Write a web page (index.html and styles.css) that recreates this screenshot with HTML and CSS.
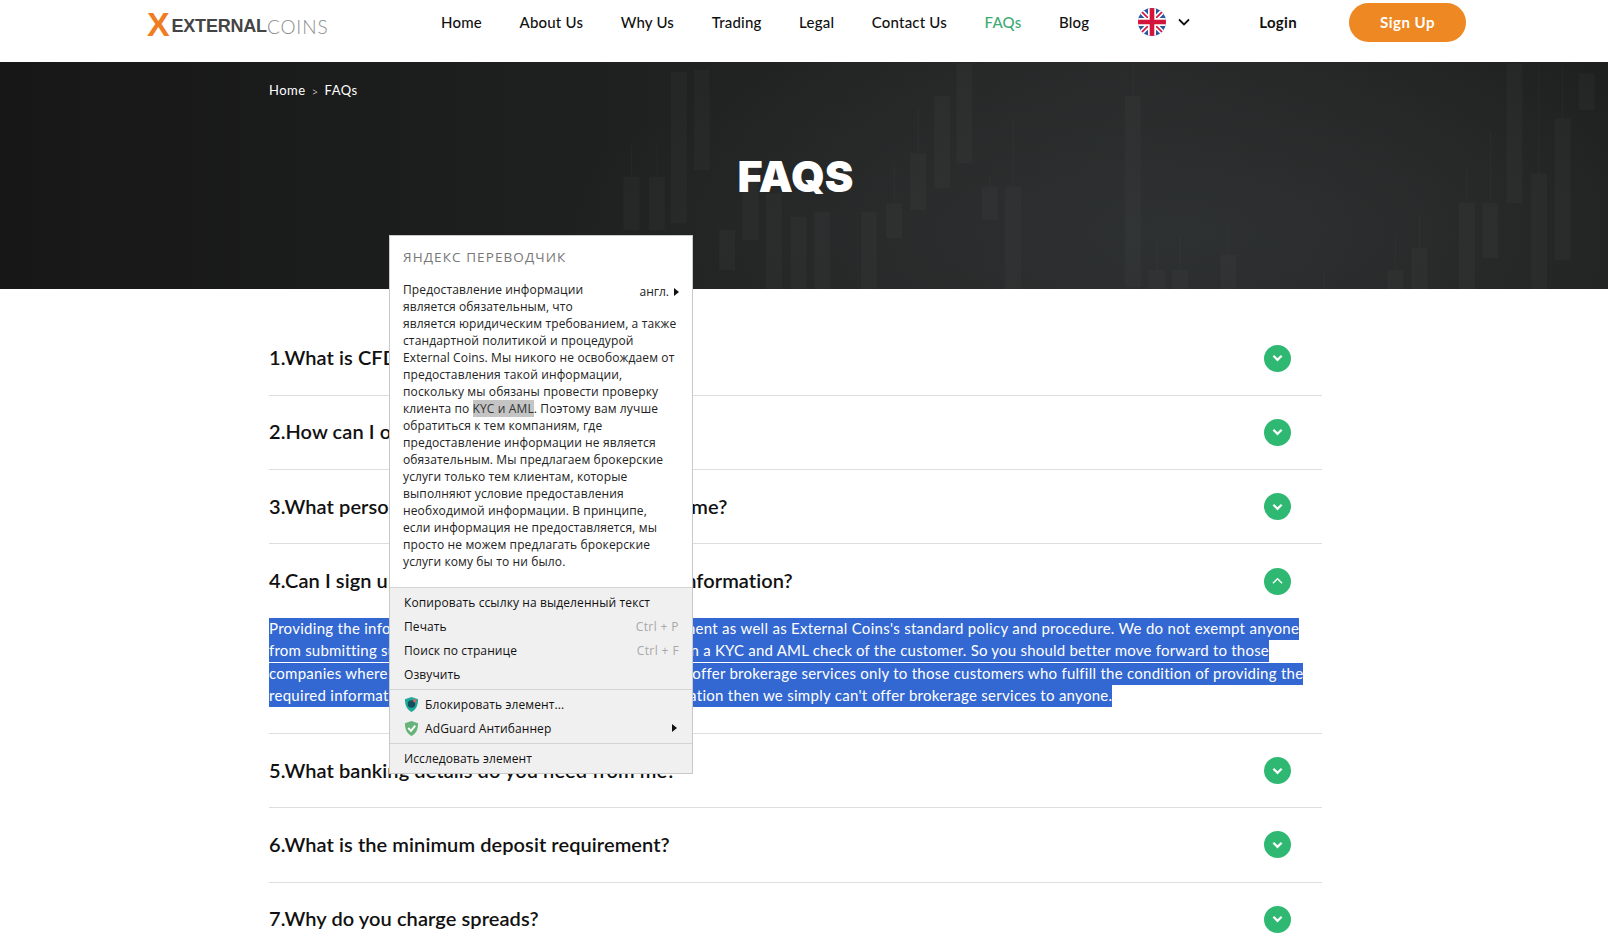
FILE: index.html
```html
<!DOCTYPE html>
<html lang="en">
<head>
  <meta charset="UTF-8" />
  <meta name="viewport" content="width=device-width, initial-scale=1.0" />
  <title>FAQs - External Coins</title>
  <link rel="stylesheet" href="styles.css">
</head>
<body>
  <header class="topbar">
    <a class="logo" href="#"><span class="logo-x">X</span><b>EXTERNAL</b><span class="logo-thin">COINS</span></a>
    <nav class="menu">
      <a href="#">Home</a>
      <a href="#">About Us</a>
      <a href="#">Why Us</a>
      <a href="#">Trading</a>
      <a href="#">Legal</a>
      <a href="#">Contact Us</a>
      <a href="#" class="active">FAQs</a>
      <a href="#">Blog</a>
    </nav>
    <div class="lang">
      <svg class="flag" viewBox="0 0 28 28" width="28" height="28">
        <defs><clipPath id="round"><circle cx="14" cy="14" r="14"/></clipPath></defs>
        <g clip-path="url(#round)">
          <rect width="28" height="28" fill="#2a57a5"/>
          <path d="M0 0L28 28M28 0L0 28" stroke="#fff" stroke-width="5"/>
          <path d="M0 0L28 28M28 0L0 28" stroke="#d3153c" stroke-width="1.6"/>
          <path d="M14 0V28M0 14H28" stroke="#fff" stroke-width="8"/>
          <path d="M14 0V28M0 14H28" stroke="#d3153c" stroke-width="4.6"/>
        </g>
      </svg>
      <svg class="caret" viewBox="0 0 12 8" width="12" height="8"><path d="M1 1.5L6 6.5L11 1.5" fill="none" stroke="#111" stroke-width="1.8"/></svg>
    </div>
    <a class="login" href="#">Login</a>
    <a class="signup" href="#">Sign Up</a>
  </header>

  <section class="hero">
    <svg class="candles" viewBox="0 6 1568 681" preserveAspectRatio="none">
      <g fill="#fff" fill-opacity="0.025">
        <rect x="95" y="350" width="24" height="160"/><rect x="133" y="350" width="24" height="160"/>
        <rect x="166" y="35" width="24" height="455"/><rect x="200" y="30" width="24" height="300"/>
        <rect x="238" y="510" width="24" height="120"/><rect x="273" y="300" width="24" height="240"/>
        <rect x="308" y="400" width="24" height="287"/><rect x="345" y="470" width="24" height="217"/>
        <rect x="380" y="455" width="24" height="232"/><rect x="450" y="455" width="24" height="232"/>
        <rect x="488" y="430" width="24" height="105"/><rect x="524" y="280" width="24" height="170"/>
        <rect x="560" y="108" width="24" height="277"/><rect x="593" y="10" width="24" height="300"/>
        <rect x="631" y="380" width="24" height="100"/><rect x="666" y="380" width="24" height="307"/>
        <rect x="845" y="108" width="24" height="572"/><rect x="881" y="630" width="24" height="57"/>
        <rect x="916" y="630" width="24" height="57"/><rect x="988" y="585" width="24" height="102"/>
        <rect x="1238" y="630" width="24" height="57"/><rect x="1274" y="565" width="24" height="122"/>
        <rect x="1345" y="428" width="24" height="259"/><rect x="1380" y="428" width="24" height="167"/>
        <rect x="1416" y="10" width="24" height="420"/><rect x="1453" y="340" width="24" height="347"/>
        <rect x="1488" y="175" width="24" height="425"/><rect x="1524" y="40" width="24" height="110"/>
      </g>
      <g stroke="#fff" stroke-opacity="0.025" stroke-width="2">
        <path d="M107 255V350M145 250V350M536 140V280M500 305V430M643 350V380M678 170V380M857 10V108M893 530V630M928 530V630M1000 490V585M1143 630V687M1250 530V630M1286 465V565M1357 325V428M1392 215V428M1465 10V340M1500 20V175"/>
      </g>
    </svg>
    <div class="crumbs"><a href="#">Home</a><span class="sep">&gt;</span><a href="#">FAQs</a></div>
    <h1>FAQS</h1>
  </section>

  <main class="faq">
    <div class="row">
      <h3>1.What is CFD?</h3>
      <span class="toggle"><svg viewBox="0 0 12 8" width="11" height="8"><path d="M1.5 1.5L6 6L10.5 1.5" fill="none" stroke="#fff" stroke-width="2.4"/></svg></span>
    </div>
    <div class="row">
      <h3>2.How can I open an account?</h3>
      <span class="toggle"><svg viewBox="0 0 12 8" width="11" height="8"><path d="M1.5 1.5L6 6L10.5 1.5" fill="none" stroke="#fff" stroke-width="2.4"/></svg></span>
    </div>
    <div class="row">
      <h3>3.What personal information do you need from me?</h3>
      <span class="toggle"><svg viewBox="0 0 12 8" width="11" height="8"><path d="M1.5 1.5L6 6L10.5 1.5" fill="none" stroke="#fff" stroke-width="2.4"/></svg></span>
    </div>
    <div class="item-open">
      <div class="row-head">
        <h3>4.Can I sign up without providing my personal information?</h3>
        <span class="toggle"><svg viewBox="0 0 12 8" width="11" height="8"><path d="M1 6.5L6 1.5L11 6.5" fill="none" stroke="#fff" stroke-width="1.5"/></svg></span>
      </div>
      <div class="answer">
        <span>Providing the information is mandatory that is a legal requirement as well as External Coins's standard policy and procedure. We do not exempt anyone</span>
        <span class="second">from submitting such information, because we are bound to run a KYC and AML check of the customer. So you should better move forward to those</span>
        <span class="third">companies where providing information is not mandatory. We offer brokerage services only to those customers who fulfill the condition of providing the</span>
        <span>required information. In fact, if there is no provision of information then we simply can't offer brokerage services to anyone.</span>
      </div>
    </div>
    <div class="row">
      <h3>5.What banking details do you need from me?</h3>
      <span class="toggle"><svg viewBox="0 0 12 8" width="11" height="8"><path d="M1.5 1.5L6 6L10.5 1.5" fill="none" stroke="#fff" stroke-width="2.4"/></svg></span>
    </div>
    <div class="row">
      <h3>6.What is the minimum deposit requirement?</h3>
      <span class="toggle"><svg viewBox="0 0 12 8" width="11" height="8"><path d="M1.5 1.5L6 6L10.5 1.5" fill="none" stroke="#fff" stroke-width="2.4"/></svg></span>
    </div>
    <div class="row">
      <h3>7.Why do you charge spreads?</h3>
      <span class="toggle"><svg viewBox="0 0 12 8" width="11" height="8"><path d="M1.5 1.5L6 6L10.5 1.5" fill="none" stroke="#fff" stroke-width="2.4"/></svg></span>
    </div>
  </main>

  <!-- browser context menu, sits over the page -->
  <div class="popup" lang="ru">
    <div class="translator">
      <h4>ЯНДЕКС ПЕРЕВОДЧИК</h4>
      <span class="from">англ. <i class="arrow"></i></span>
      <p>Предоставление информации<br>является обязательным, что<br>является юридическим требованием, а также<br>стандартной политикой и процедурой<br>External Coins. Мы никого не освобождаем от<br>предоставления такой информации,<br>поскольку мы обязаны провести проверку<br>клиента по <mark>KYC и AML</mark>. Поэтому вам лучше<br>обратиться к тем компаниям, где<br>предоставление информации не является<br>обязательным. Мы предлагаем брокерские<br>услуги только тем клиентам, которые<br>выполняют условие предоставления<br>необходимой информации. В принципе,<br>если информация не предоставляется, мы<br>просто не можем предлагать брокерские<br>услуги кому бы то ни было.</p>
    </div>
    <ul class="ctx">
      <li>Копировать ссылку на выделенный текст</li>
      <li>Печать<kbd>Ctrl + P</kbd></li>
      <li>Поиск по странице<kbd>Ctrl + F</kbd></li>
      <li>Озвучить</li>
    </ul>
    <ul class="ctx">
      <li class="ext">
        <svg viewBox="0 0 16 18" width="15" height="17"><path d="M8 1L15 3.5C15 10 13 14.500 8 17C3 14.500 1 10 1 3.500Z" fill="#1fa898"/><circle cx="8" cy="8.500" r="4" fill="#174e5c"/><circle cx="11.500" cy="5" r="1.800" fill="#d9606a"/></svg>
        Блокировать элемент...
      </li>
      <li class="ext">
        <svg viewBox="0 0 16 18" width="15" height="17"><path d="M8 1L15 3.500C15 10 13 14.500 8 17C3 14.500 1 10 1 3.500Z" fill="#68b37a"/><path d="M4.500 8.500L7.500 11.500L12 6" fill="none" stroke="#fff" stroke-width="2"/></svg>
        AdGuard Антибаннер<i class="arrow"></i>
      </li>
    </ul>
    <ul class="ctx">
      <li>Исследовать элемент</li>
    </ul>
  </div>
</body>
</html>
```

FILE: styles.css
```css
* {
  margin: 0;
  padding: 0;
  box-sizing: border-box;
}

html, body {
  height: 952px;
  overflow: hidden;
}

body {
  position: relative;
  background: #fff;
  color: #111;
  font-family: 'Lato', 'Liberation Sans', sans-serif;
}

a {
  color: inherit;
  text-decoration: none;
}

.topbar {
  height: 62px;
  padding: 0 142px 18px 147px;
  display: flex;
  align-items: center;
  background: #fff;
}

.logo {
  width: 180px;
  margin-top: 8px;
  display: flex;
  align-items: center;
  font-family: 'Liberation Sans', sans-serif;
  font-size: 18px;
  letter-spacing: -0.2px;
  color: #444;
}

.logo-x {
  font-size: 34px;
  font-weight: 700;
  color: #ef7d22;
  line-height: 1;
  margin-top: -5px;
  margin-right: 2px;
}

.logo-thin {
  color: #8a8a8a;
  font-family: 'Lato', sans-serif;
  font-size: 19px;
  font-weight: 300;
  letter-spacing: 0.9px;
}

.menu {
  margin-left: 114px;
  display: flex;
  gap: 37.6px;
  font-size: 15px;
  font-weight: 500;
  letter-spacing: 0.2px;
}

.menu .active {
  color: #3dab74;
}

.lang {
  margin-left: 49px;
  display: flex;
  align-items: center;
  gap: 12px;
}

.login {
  margin-left: 69px;
  font-size: 15px;
  font-weight: 700;
  letter-spacing: 0.3px;
}

.signup {
  margin-left: auto;
  width: 117px;
  height: 39px;
  border-radius: 20px;
  background: #ee8822;
  color: #fff;
  font-size: 15px;
  font-weight: 700;
  letter-spacing: 0.5px;
  display: flex;
  align-items: center;
  justify-content: center;
}

.hero {
  height: 227px;
  position: relative;
  background: radial-gradient(ellipse 620px 220px at 1180px 170px, #2e3131 0%, rgba(46, 49, 49, 0) 100%), linear-gradient(90deg, #171717 0%, #1e1f1f 35%, #272929 70%, #1e1f1f 100%);
  color: #fff;
  padding: 20px 286px 0 269px;
}

.candles {
  position: absolute;
  top: 0;
  right: 0;
  width: 1048px;
  height: 227px;
}

.crumbs {
  position: relative;
  font-size: 13px;
  letter-spacing: 0.5px;
  display: flex;
  gap: 6px;
  line-height: 17px;
}

.crumbs .sep {
  font-size: 11px;
  font-weight: 300;
  padding-top: 1px;
}

.hero h1 {
  position: relative;
  margin-top: 51px;
  text-align: center;
  font-family: 'Inter', 'Lato', sans-serif;
  font-size: 43px;
  line-height: 50px;
  font-weight: 900;
}

.faq {
  width: 1053px;
  margin: 32.5px 0 0 269px;
}

.row, .row-head {
  display: flex;
  align-items: center;
  justify-content: space-between;
  padding-right: 31px;
}

.row {
  height: 74.25px;
  border-bottom: 1px solid #ddd;
}

.row-head {
  height: 73.75px;
}

.item-open {
  border-bottom: 1px solid #ddd;
  padding-bottom: 26px;
}

.faq h3 {
  font-size: 20px;
  font-weight: 600;
  letter-spacing: 0.08px;
  padding-bottom: 2px;
}

.toggle {
  width: 27px;
  height: 27px;
  border-radius: 50%;
  background: #2fb872;
  display: flex;
  align-items: center;
  justify-content: center;
}

.answer {
  font-size: 15px;
  line-height: 21px;
  letter-spacing: 0.29px;
  color: #fff;
}

.answer span {
  display: block;
  width: fit-content;
  padding-bottom: 1px;
  background: #3367d1;
  white-space: nowrap;
}

.answer .second {
  letter-spacing: 0.21px;
}

.answer .third {
  margin-top: 1px;
  letter-spacing: 0.26px;
}

.popup {
  position: absolute;
  left: 389px;
  top: 235px;
  width: 304px;
  height: 539px;
  background: #fff;
  border: 1px solid #c9c9c9;
  font-family: 'Open Sans', 'Noto Sans', sans-serif;
  color: #222;
  display: flex;
  flex-direction: column;
}

.translator {
  flex: none;
  height: 351px;
  padding: 12px 13px 0;
}

.translator h4 {
  font-size: 13.5px;
  line-height: 18px;
  font-weight: 400;
  letter-spacing: 1.1px;
  color: #777;
  margin-bottom: 15px;
}

.translator p {
  font-size: 12px;
  line-height: 17px;
  letter-spacing: 0.12px;
}

.translator mark {
  background: #c4c4c4;
  color: #333;
}

.from {
  float: right;
  font-size: 12px;
  line-height: 17px;
  margin-top: 2px;
  display: flex;
  align-items: center;
  gap: 5px;
}

.arrow {
  display: inline-block;
  border-left: 5px solid #111;
  border-top: 4px solid transparent;
  border-bottom: 4px solid transparent;
}

.ctx {
  flex: none;
  list-style: none;
  background: #f0f0f0;
  border-top: 1px solid #d4d4d4;
  padding: 3px 0 2px;
  font-size: 12px;
  letter-spacing: 0.1px;
}

.ctx li {
  height: 24px;
  padding: 0 13px 2px 14px;
  display: flex;
  align-items: center;
  justify-content: space-between;
  color: #111;
}

.ctx kbd {
  font-family: inherit;
  letter-spacing: 0.4px;
  color: #a8a8a8;
}

.ctx .ext {
  justify-content: flex-start;
  gap: 6px;
}

.ext .arrow {
  margin-left: auto;
  margin-right: 2px;
}
```
